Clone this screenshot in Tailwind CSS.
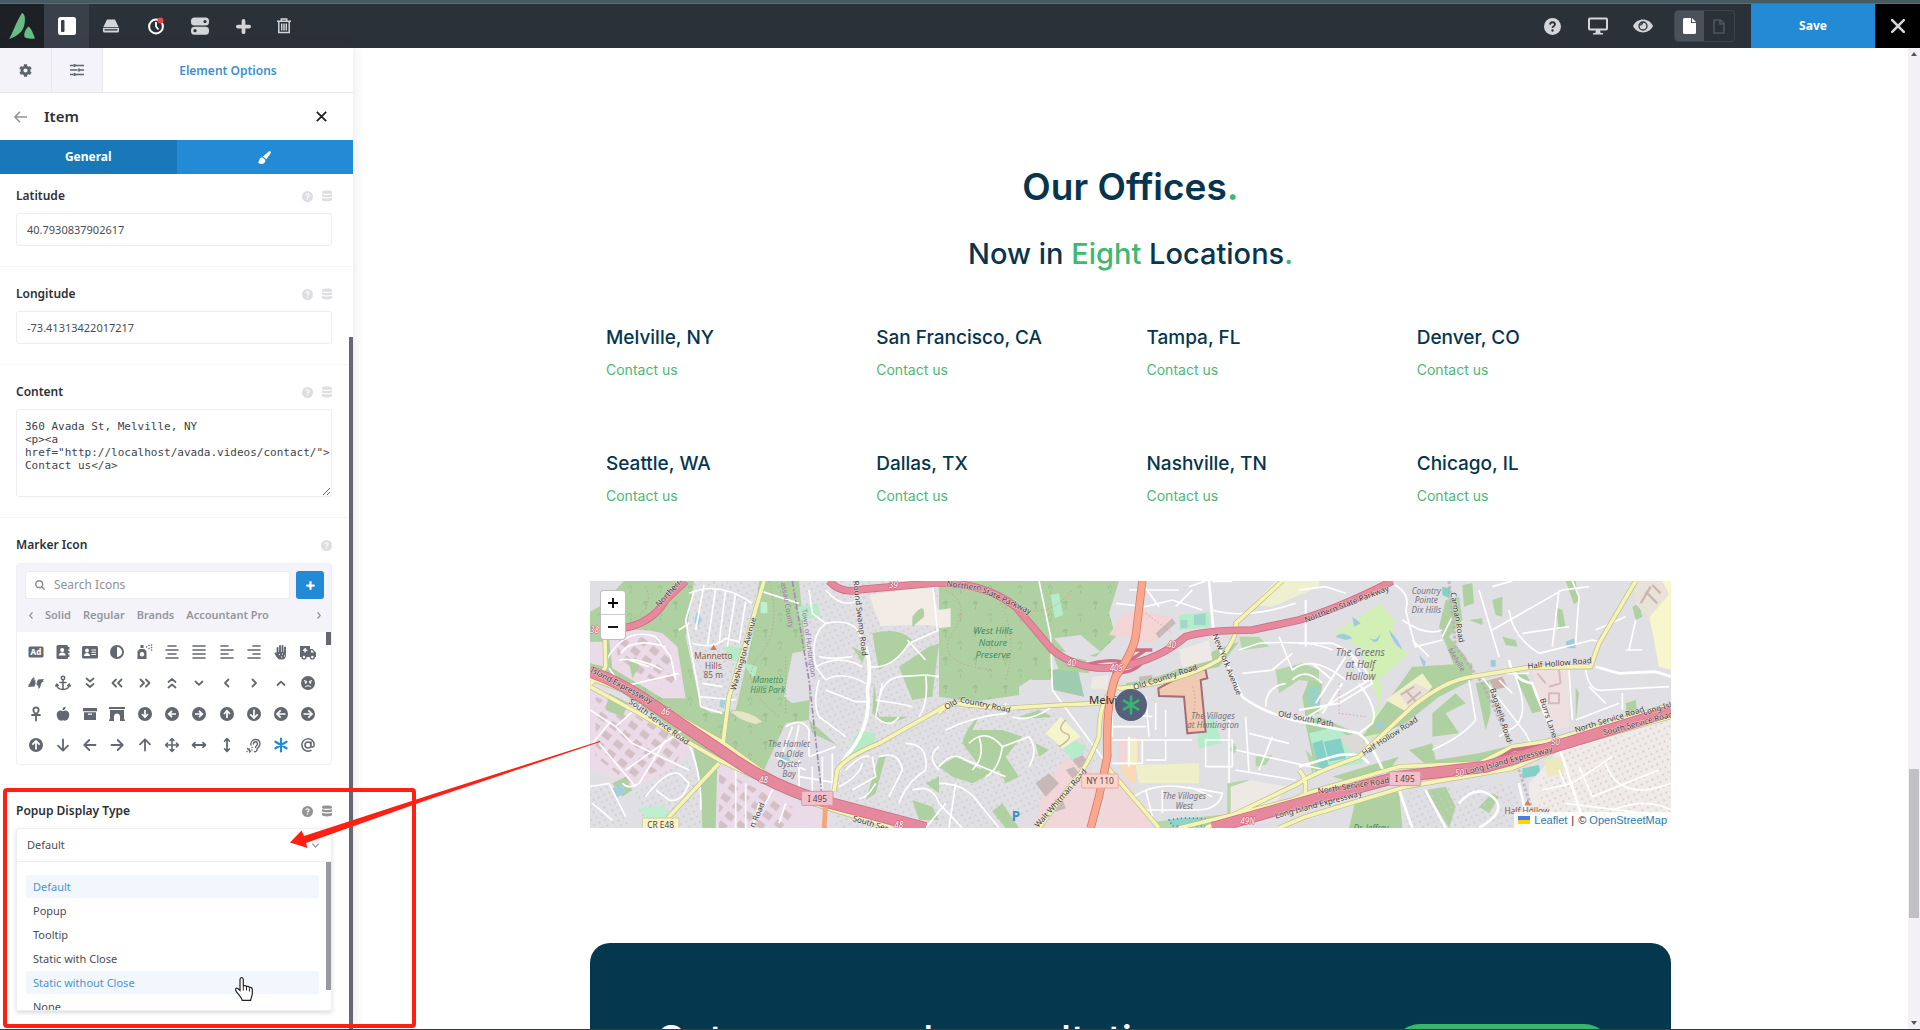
<!DOCTYPE html>
<html lang="en">
  <head>
    <meta charset="UTF-8" />
    <meta name="viewport" content="width=device-width, initial-scale=1.0" />
    <title>Avada Live Builder</title>
    <script src="https://cdn.jsdelivr.net/npm/@tailwindcss/browser@4"></script>
  </head>
  <body class="h-screen flex flex-col overflow-hidden bg-white font-['Noto_Sans',sans-serif] text-[#2c3138]">
    <!-- shared icons -->
    <svg class="hidden">
      <symbol id="help" viewBox="0 0 16 16">
        <circle cx="8" cy="8" r="8" fill="currentColor" />
        <path d="M5.7 6.2C5.8 4.7 6.8 4 8 4s2.3.8 2.3 2C10.300 7.700 8 7.600 8 9.400" fill="none" stroke="var(--mark)" stroke-width="1.7" />
        <circle cx="8" cy="11.800" r="1.100" fill="var(--mark)" />
      </symbol>
      <symbol id="database" viewBox="0 0 16 18">
        <path d="M0 2.500C0 -.6 16 -.6 16 2.500V4c0 2-16 2-16 0zM0 6.200c3 1.500 13 1.500 16 0V9.500c0 2-16 2-16 0zM0 11.700c3 1.500 13 1.500 16 0V15.500c0 3-16 3-16 0z" fill="currentColor" />
      </symbol>
      <symbol id="plus" viewBox="0 0 16 16">
        <path d="M8 2v12M2 8h12" stroke="currentColor" stroke-width="4" stroke-linecap="round" />
      </symbol>
    </svg>

    <div class="h-1 shrink-0 bg-[#465a61] border-b border-[#5c6e75]"></div>
    <header class="h-11 shrink-0 flex items-stretch bg-[#2b3138] text-[#d3d5d8]">
      <a href="#" aria-label="Avada" class="w-11 bg-[#1d2125] flex items-center justify-center">
        <svg class="w-[26px] h-[26px]" viewBox="0 0 26 26" fill="#67bd84">
          <path d="M13 0C16 1 16.500 6 15.500 11 14.300 18 10 22.500 0 26 4 20 5 13 13 0z" />
          <path d="M19.500 13.500C22 15 24 20 26 25.500 21 26 17 25.500 15.500 24 14.500 20 17 15.500 19.500 13.500z" />
        </svg>
      </a>
      <button aria-label="Toggle sidebar" class="w-[45px] bg-[#3a4049] flex items-center justify-center">
        <svg class="w-[18px] h-[18px]" viewBox="0 0 18 18"><rect width="18" height="18" rx="2.500" fill="#fff" /><rect x="3" y="3" width="3.500" height="12" rx="1" fill="#3a4049" /></svg>
      </button>
      <button aria-label="Library" class="w-11 flex items-center justify-center">
        <svg class="w-4 h-[14px]" viewBox="0 0 16 14" fill="currentColor"><path d="M4 .5h8L15.600 8H.4z" /><path fill-rule="evenodd" d="M0 8.800h16V12a1.500 1.500 0 0 1-1.500 1.500h-13A1.500 1.500 0 0 1 0 12zM1.500 10.200v1.300h13v-1.300z" /></svg>
      </button>
      <button aria-label="History" class="w-[45px] flex items-center justify-center">
        <svg class="w-[18px] h-[18px]" viewBox="0 0 18 18" fill="none"><circle cx="9" cy="9.500" r="6.900" stroke="#fff" stroke-width="2" /><path d="M9 5v4.500l2.500 3" stroke="#fff" stroke-width="1.800" /><circle cx="13.500" cy="3.500" r="3" fill="#e5484d" /></svg>
      </button>
      <button aria-label="Preferences" class="w-11 flex items-center justify-center">
        <svg class="w-[18px] h-[18px]" viewBox="0 0 18 18" fill="currentColor"><rect y=".5" width="18" height="8" rx="3.500" /><rect y="9.700" width="18" height="8" rx="3.500" /><circle cx="14" cy="4.500" r="1.600" fill="#2b3138" /><circle cx="4" cy="13.700" r="1.600" fill="#2b3138" /></svg>
      </button>
      <button aria-label="Add" class="w-[42px] flex items-center justify-center">
        <svg class="w-[15px] h-[15px]"><use href="#plus" /></svg>
      </button>
      <button aria-label="Delete" class="w-10 flex items-center justify-center">
        <svg class="w-[14px] h-4" viewBox="0 0 14 16" fill="none" stroke="currentColor" stroke-width="1.500"><path d="M0 3.200h14M4.300 3V1h5.400v2M1.800 3.500v11h10.400v-11M4.700 5.500v7M7 5.500v7M9.300 5.500v7" /></svg>
      </button>

      <div class="ml-auto flex items-stretch">
        <button aria-label="Help" class="w-[45px] flex items-center justify-center [--mark:#2b3138]">
          <svg class="w-[17px] h-[17px]"><use href="#help" /></svg>
        </button>
        <button aria-label="Responsive view" class="w-[45px] flex items-center justify-center">
          <svg class="w-5 h-[18px]" viewBox="0 0 20 18"><rect x="1" y="1.500" width="18" height="11" rx="1" fill="none" stroke="currentColor" stroke-width="2" /><path d="M8 13h4l.7 3H15v1.500H5V16h2.300z" fill="currentColor" /></svg>
        </button>
        <button aria-label="Preview" class="w-[46px] flex items-center justify-center">
          <svg class="w-5 h-[14px]" viewBox="0 0 20 14"><path d="M0 7C4-1.600 16-1.600 20 7 16 15.600 4 15.600 0 7z" fill="currentColor" /><circle cx="10" cy="7" r="4" fill="none" stroke="#2b3138" stroke-width="1.300" /><path d="M7.500 6.500A2.500 2.500 0 0 1 10 4.500" fill="none" stroke="#2b3138" stroke-width="1.500" /></svg>
        </button>
        <div class="my-[6px] ml-2 mr-4 flex rounded border border-[#3d444d] overflow-hidden">
          <button aria-label="Published" class="w-[29px] bg-[#4a515b] flex items-center justify-center">
            <svg class="w-[13px] h-4" viewBox="0 0 13 16" fill="#fff"><path d="M1.500 0H8v5h5v9.500a1.500 1.500 0 0 1-1.500 1.500h-10A1.500 1.500 0 0 1 0 14.500v-13A1.500 1.500 0 0 1 1.500 0z" /><path d="M9 0l4 4H9z" /></svg>
          </button>
          <button aria-label="Draft" class="w-[30px] flex items-center justify-center">
            <svg class="w-3 h-[15px]" viewBox="0 0 12 15" fill="none" stroke="#4d545d" stroke-width="1.700"><path d="M1 1h6.500L11 4.500V14H1zM7 1v4h4" /></svg>
          </button>
        </div>
        <button class="w-[124px] bg-[#238bd6] text-white text-xs font-bold">Save</button>
        <button aria-label="Close" class="w-[45px] bg-black flex items-center justify-center">
          <svg class="w-[14px] h-[14px]" viewBox="0 0 14 14"><path d="M1.200 1.200l11.600 11.600M12.800 1.200L1.200 12.800" stroke="#d3d5d8" stroke-width="2.600" stroke-linecap="round" /></svg>
        </button>
      </div>
    </header>

    <div class="flex-1 min-h-0 flex relative">
      <!-- element options panel -->
      <aside class="w-[353px] shrink-0 relative flex flex-col bg-white shadow-[0_0_12px_rgba(60,50,90,0.14)] z-10">
        <nav class="h-[45px] shrink-0 flex border-b border-[#e8e8ec]">
          <button aria-label="Settings" class="w-[51px] bg-[#f3f3f9] flex items-center justify-center">
            <svg class="w-[13px] h-[13px]" viewBox="0 0 512 512" fill="#5f636b"><path d="M487.400 315.700l-42.600-24.600c4.300-23.200 4.300-47 0-70.200l42.600-24.600c4.900-2.800 7.100-8.600 5.500-14-11.100-35.600-30-67.800-54.700-94.600-3.800-4.100-10-5.100-14.800-2.300L380.800 110c-17.900-15.400-38.500-27.300-60.800-35.100V25.800c0-5.600-3.900-10.500-9.400-11.700-36.700-8.200-74.300-7.800-109.200 0-5.500 1.200-9.400 6.100-9.400 11.700V75c-22.200 7.900-42.800 19.800-60.800 35.100L88.700 85.500c-4.900-2.800-11-1.900-14.800 2.300-24.700 26.700-43.600 58.900-54.700 94.600-1.700 5.400.6 11.200 5.500 14L67.300 221c-4.300 23.200-4.300 47 0 70.200l-42.600 24.600c-4.900 2.800-7.100 8.600-5.500 14 11.100 35.600 30 67.800 54.700 94.600 3.800 4.100 10 5.100 14.800 2.300l42.600-24.600c17.900 15.400 38.500 27.300 60.800 35.100v49.200c0 5.600 3.900 10.500 9.400 11.700 36.700 8.200 74.300 7.800 109.200 0 5.500-1.200 9.400-6.100 9.400-11.700v-49.200c22.200-7.900 42.800-19.800 60.800-35.100l42.600 24.600c4.900 2.800 11 1.900 14.800-2.300 24.700-26.700 43.600-58.900 54.700-94.600 1.500-5.500-.7-11.300-5.600-14.100zM256 336c-44.100 0-80-35.900-80-80s35.900-80 80-80 80 35.900 80 80-35.900 80-80 80z" /></svg>
          </button>
          <button aria-label="Page options" class="w-[52px] bg-[#f3f3f9] border-x border-[#e8e8ee] flex items-center justify-center">
            <svg class="w-[14px] h-3" viewBox="0 0 14 12" stroke="#5f636b" stroke-width="1.500"><path d="M0 1.500h3.500M5 1.500h9M0 6h7.500M10 6h4M0 10.500h3.500M5 10.500h9" /><path d="M4.500 0v3M9 4.500v3M4.500 9v3" stroke-width="1.800" /></svg>
          </button>
          <button class="flex-1 pt-[2px] text-xs font-semibold text-[#3d8fd1]">Element Options</button>
        </nav>
        <div class="h-[47px] shrink-0 flex items-center pl-[14px] pr-[26px]">
          <button aria-label="Back"><svg class="w-[13px] h-3" viewBox="0 0 13 12" fill="none" stroke="#8f9298" stroke-width="1.500"><path d="M13 6H1M6 .8L.9 6 6 11.200" /></svg></button>
          <h2 class="ml-[17px] text-[15px] font-semibold">Item</h2>
          <button aria-label="Close item" class="ml-auto"><svg class="w-[11px] h-[11px]" viewBox="0 0 11 11" stroke="#1f2328" stroke-width="1.800"><path d="M.8.8l9.400 9.400M10.200.8L.8 10.200" /></svg></button>
        </div>
        <div class="h-[34px] shrink-0 flex text-white">
          <button class="flex-1 bg-[#1878ba] text-xs font-bold">General</button>
          <button aria-label="Design" class="flex-1 bg-[#238bd6] flex items-center justify-center">
            <svg class="w-[13px] h-[13px]" viewBox="0 0 13 13" fill="#fff"><path d="M12.500.4c.6.500.6 1.200.2 1.800L8.300 8.300 5 5.500 10.800.500c.5-.4 1.200-.5 1.700-.1zM4.300 6.300l3 2.700C7.500 11.500 6 13 3.500 13 1.500 13 .3 12.300 0 11c1.800-.3.8-4.500 4.300-4.700z" /></svg>
          </button>
        </div>

        <div class="flex-1 min-h-0 overflow-hidden text-[11px] [--mark:#fff]">
          <section class="pt-3 pb-5 pl-4 pr-[21px] border-b border-[#f6f6f8]">
            <div class="h-5 flex items-center gap-[9px] text-[#dedde1]">
              <label for="latitude" class="mr-auto text-xs font-semibold text-[#2c3138]">Latitude</label>
              <svg class="w-[11px] h-[11px]"><use href="#help" /></svg>
              <svg class="w-[10px] h-3"><use href="#database" /></svg>
            </div>
            <input id="latitude" type="text" value="40.7930837902617" class="mt-[7px] block w-full h-[33px] px-[10px] border border-[#eeeef1] rounded-[3px] text-[#4a4e57]" />
          </section>
          <section class="pt-[17px] pb-5 pl-4 pr-[21px] border-b border-[#f6f6f8]">
            <div class="h-5 flex items-center gap-[9px] text-[#dedde1]">
              <label for="longitude" class="mr-auto text-xs font-semibold text-[#2c3138]">Longitude</label>
              <svg class="w-[11px] h-[11px]"><use href="#help" /></svg>
              <svg class="w-[10px] h-3"><use href="#database" /></svg>
            </div>
            <input id="longitude" type="text" value="-73.41313422017217" class="mt-[7px] block w-full h-[33px] px-[10px] border border-[#eeeef1] rounded-[3px] text-[#4a4e57]" />
          </section>
          <section class="pt-[17px] pb-5 pl-4 pr-[21px] border-b border-[#f6f6f8]">
            <div class="h-5 flex items-center gap-[9px] text-[#dedde1]">
              <label for="content" class="mr-auto text-xs font-semibold text-[#2c3138]">Content</label>
              <svg class="w-[11px] h-[11px]"><use href="#help" /></svg>
              <svg class="w-[10px] h-3"><use href="#database" /></svg>
            </div>
            <textarea id="content" class="mt-[7px] block w-full h-[88px] pt-[10px] pl-2 pr-0 border border-[#eeeef1] rounded-[3px] font-['DejaVu_Sans_Mono',monospace] text-[11px] leading-[13px] text-[#3f434b] resize-y overflow-hidden">360 Avada St, Melville, NY
&lt;p&gt;&lt;a
href="http://localhost/avada.videos/contact/"&gt;
Contact us&lt;/a&gt;</textarea>
          </section>
          <section class="pt-[17px] pb-[19px] pl-4 pr-[21px] border-b border-[#f6f6f8]">
            <div class="h-5 flex items-center text-[#dedde1]">
              <label for="search" class="mr-auto text-xs font-semibold text-[#2c3138]">Marker Icon</label>
              <svg class="w-[11px] h-[11px]"><use href="#help" /></svg>
            </div>
            <div class="mt-2 relative border border-[#f0f0f4] rounded-[3px]">
              <div class="h-[68px] bg-[#f3f3f9] pt-[7px] pl-2 pr-[7px]">
                <div class="flex gap-[6px]">
                  <div class="flex-1 h-7 flex items-center gap-[9px] pl-[9px] bg-white border border-[#ececf0] rounded-[3px]">
                    <svg class="w-[10px] h-[10px] shrink-0" viewBox="0 0 10 10" fill="none" stroke="#8a8d94" stroke-width="1.500"><circle cx="4.200" cy="4.200" r="3.400" /><path d="M6.700 6.700l3 3" /></svg>
                    <input id="search" type="text" placeholder="Search Icons" class="w-full text-xs placeholder:text-[#8f9196]" />
                  </div>
                  <button aria-label="Add icon set" class="w-7 h-7 flex items-center justify-center rounded-[3px] bg-[#238bd6] text-white">
                    <svg class="w-[9px] h-[9px]"><use href="#plus" /></svg>
                  </button>
                </div>
                <div class="mt-[6px] h-5 flex items-center gap-3 pl-1 pr-[3px] font-semibold text-[#94969c]">
                  <button aria-label="Previous sets"><svg class="w-1 h-[7px]" viewBox="0 0 4 7" fill="none" stroke="#8a8d94" stroke-width="1.200"><path d="M3.500.4L.7 3.500l2.800 3.100" /></svg></button>
                  <button>Solid</button>
                  <button>Regular</button>
                  <button>Brands</button>
                  <button>Accountant Pro</button>
                  <button aria-label="Next sets" class="ml-auto"><svg class="w-1 h-[7px]" viewBox="0 0 4 7" fill="none" stroke="#8a8d94" stroke-width="1.200"><path d="M.5.4l2.800 3.100L.5 6.600" /></svg></button>
                </div>
              </div>
              <div id="icons" class="grid grid-cols-11 pt-1 pb-1 pl-[5px] pr-[9px] text-[#636770]"></div>
              <div class="absolute right-0 top-[68px] w-[5px] h-[13px] bg-[#666870]"></div>
            </div>
          </section>
          <section class="pt-4 pl-4 pr-[21px]">
            <div class="h-5 flex items-center gap-[9px] text-[#929297]">
              <label for="popup" class="mr-auto text-xs font-semibold text-[#2c3138]">Popup Display Type</label>
              <svg class="w-[11px] h-[11px]"><use href="#help" /></svg>
              <svg class="w-[10px] h-3"><use href="#database" /></svg>
            </div>
            <div class="mt-[7px] relative h-[183px] overflow-hidden rounded-[3px] border border-[#eeeef1] shadow-[0_2px_4px_rgba(0,0,0,0.14)]">
              <select id="popup" class="block w-full h-[33px] pl-[10px] appearance-none border-b border-[#eeeef1] text-[#4a4e57]">
                <option>Default</option>
                <option>Popup</option>
                <option>Tooltip</option>
                <option>Static with Close</option>
                <option>Static without Close</option>
                <option>None</option>
              </select>
              <svg class="absolute right-3 top-[14px] w-[7px] h-[5px]" viewBox="0 0 7 5" fill="none" stroke="#9a9ca2" stroke-width="1.200"><path d="M.4.7l3.100 3.300L6.600.7" /></svg>
              <ul class="pt-[13px] pl-[9px] pr-3 leading-[23px] text-[#4a4e57]">
                <li class="mb-px pl-[7px] rounded-[2px] bg-[#f1f7fd] text-[#4d93cf]">Default</li>
                <li class="mb-px pl-[7px]">Popup</li>
                <li class="mb-px pl-[7px]">Tooltip</li>
                <li class="mb-px pl-[7px]">Static with Close</li>
                <li class="mb-px pl-[7px] rounded-[2px] bg-[#f1f7fd] text-[#4d93cf]">Static without Close</li>
                <li class="mb-px pl-[7px]">None</li>
              </ul>
              <div class="absolute right-0 top-[33px] w-[5px] h-32 bg-[#98999e]"></div>
            </div>
          </section>
        </div>
        <div class="absolute right-0 top-[289px] bottom-0 w-1 bg-[#666870]"></div>
      </aside>

      <!-- page preview -->
      <main class="flex-1 min-w-0 overflow-hidden font-[Inter,sans-serif] text-[#07354d]">
        <div class="w-full max-w-[1081px] mx-auto">
          <h1 class="pt-[113px] text-center text-[37px] leading-[52px] font-semibold">Our Offices<span class="text-[#40b871]">.</span></h1>
          <h2 class="mt-[22px] text-center text-[29px] leading-[38px] font-medium">Now in <span class="text-[#40b871]">Eight</span> Locations<span class="text-[#40b871]">.</span></h2>

          <div class="mt-[51px] grid grid-cols-4 gap-y-[70px]">
            <div class="pl-4">
              <h3 class="text-[19px] leading-7 font-medium">Melville, NY</h3>
              <a href="#" class="mt-2 block text-sm leading-5 text-[#4cb877]">Contact us</a>
            </div>
            <div class="pl-4">
              <h3 class="text-[19px] leading-7 font-medium">San Francisco, CA</h3>
              <a href="#" class="mt-2 block text-sm leading-5 text-[#4cb877]">Contact us</a>
            </div>
            <div class="pl-4">
              <h3 class="text-[19px] leading-7 font-medium">Tampa, FL</h3>
              <a href="#" class="mt-2 block text-sm leading-5 text-[#4cb877]">Contact us</a>
            </div>
            <div class="pl-4">
              <h3 class="text-[19px] leading-7 font-medium">Denver, CO</h3>
              <a href="#" class="mt-2 block text-sm leading-5 text-[#4cb877]">Contact us</a>
            </div>
            <div class="pl-4">
              <h3 class="text-[19px] leading-7 font-medium">Seattle, WA</h3>
              <a href="#" class="mt-2 block text-sm leading-5 text-[#4cb877]">Contact us</a>
            </div>
            <div class="pl-4">
              <h3 class="text-[19px] leading-7 font-medium">Dallas, TX</h3>
              <a href="#" class="mt-2 block text-sm leading-5 text-[#4cb877]">Contact us</a>
            </div>
            <div class="pl-4">
              <h3 class="text-[19px] leading-7 font-medium">Nashville, TN</h3>
              <a href="#" class="mt-2 block text-sm leading-5 text-[#4cb877]">Contact us</a>
            </div>
            <div class="pl-4">
              <h3 class="text-[19px] leading-7 font-medium">Chicago, IL</h3>
              <a href="#" class="mt-2 block text-sm leading-5 text-[#4cb877]">Contact us</a>
            </div>
          </div>

          <div class="mt-[75px] relative">
            <svg class="block w-full h-[247px] font-['Noto_Sans',sans-serif]" viewBox="33 33 3243 741" preserveAspectRatio="xMidYMid slice">
              <defs>
                <pattern id="houses" width="26" height="24" patternUnits="userSpaceOnUse" patternTransform="rotate(18)"><rect x="4" y="4" width="5" height="5" fill="#c9c6c9" /><rect x="17" y="15" width="5" height="5" fill="#cfccce" /></pattern>
                <pattern id="factories" width="44" height="36" patternUnits="userSpaceOnUse" patternTransform="rotate(38)"><rect x="6" y="6" width="26" height="20" fill="#d3c0c5" /></pattern>
                <pattern id="trees" width="90" height="84" patternUnits="userSpaceOnUse"><path d="M20 34v-9m-6-6a5 5 0 1 1 8 0m2 2a5 5 0 1 1 2-8M65 70v-9m-6-6a5 5 0 1 1 8 0" fill="none" stroke="#93bb84" stroke-width="2.500" /></pattern>
              </defs>
              <rect x="33" y="33" width="3243" height="741" fill="#e0dfe3" />

              <!-- west: land -->
              <path d="M33 33H740L800 110 830 250 700 200 690 450 780 530 700 690 400 560 33 300z" fill="#afd1a2" />
              <path d="M33 33H740L800 110 830 250 700 200 690 450 780 530 700 690 400 560 33 300z" fill="url(#trees)" />
              <path d="M33 33H135L60 110 33 125zM345 33H540L520 200 470 420 400 430 365 410 320 200zM640 250l50-10v150l-50 10-25-20z" fill="#e0dfe3" />
              <path d="M660 33H1010L880 80V430L960 480 1080 430V774H770L780 520 700 430z" fill="#e0dfe3" />
              <path d="M345 33H540L520 200 470 420 400 430 365 410 320 200zM670 33H1080V774H770L780 520 700 430z" fill="url(#houses)" />
              <path d="M33 215L75 215 80 290 33 280zM90 200Q160 165 250 190L295 230 320 385 250 385 100 295z" fill="#ebdbe8" />
              <path d="M110 215Q160 190 240 210L270 240 290 340 240 340 120 280z" fill="url(#factories)" />
              <path d="M33 335L160 400 340 520 300 590 170 650 33 600zM410 575L640 690 750 720V774H410z" fill="#ebdbe8" />
              <path d="M50 380L160 430 320 520 290 580 150 640 50 560zM420 600L640 710V774H420z" fill="url(#factories)" />
              <path d="M33 640L90 640 150 774H33zM170 660L330 560 370 640 365 774H190z" fill="url(#houses)" />
              <path d="M340 520L415 575 410 774H370L365 640zM90 370l60 30-20 40-50-20zM150 280l20-20 10 30-20 35zM100 640l40-20 20 40-30 20z" fill="#afd1a2" />
              <path d="M440 225l50 10-5 40-40-5zM490 275l45 15-10 40zM655 110l60-10 10 40-60 10zM840 480l50 10-5 40-95 45z" fill="#b7ebc8" />
              <path d="M180 715l70-10 30 40-50 29zM545 95h20v35h-20z" fill="#bdf0d0" />
              <path d="M620 460L690 450 700 490 785 530 770 660 700 680 555 600z" fill="#dfdce3" />
              <path d="M455 425Q500 415 550 455L530 462Q480 450 455 425z" fill="#e8e5c6" />
              <path d="M870 75L1060 48 1075 115 1115 120 1110 172 1040 165 905 168z" fill="#f2ebe6" />
              <path d="M1000 140Q1040 90 1035 140L1000 170zM880 190Q960 170 1000 210L960 260 900 300 890 250zM885 340L900 440 990 440 920 465 880 430zM820 230L860 250 850 280zM960 290L1050 230 1080 220 1060 380 1000 390z" fill="#afd1a2" />
              <path d="M900 560l20 0-30 110-30 20zM1000 690l60 20 20 40-60 0zM1040 640l40-20v50z" fill="#afd1a2" />
              <path d="M353 125l15 20-10 25-12-15zM425 385l15 5-5 25-14-5zM100 655l30-12 10 20-25 20zM598 560l30-10 5 25-28 5z" fill="#a6cfdc" />

              <!-- middle: land -->
              <g transform="translate(1080 0)">
                <path d="M0 33H540L510 130 530 200 470 260 340 240 335 330 270 330 240 375 100 395 0 380z" fill="#afd1a2" />
                <path d="M0 33H540L510 130 530 200 470 260 340 240 335 330 270 330 240 375 100 395 0 380z" fill="url(#trees)" />
                <path d="M345 205l80-10 60 50-80 30zM240 350l35-22 45 20v60h-80z" fill="#e0dfe3" />
                <path d="M0 405H240L340 420 480 560 420 650 200 774H0z" fill="url(#houses)" />
                <path d="M335 300l80-10 20 90-90-20z" fill="#9fcbb0" />
                <path d="M0 120l35-5 0 55-35 5z" fill="#f2ebe6" />
                <path d="M335 75l25-5 12 65-25 10zM720 135l90-10 5 45-95 10zM370 540l40-30 35 25-40 35zM1100 470l40-10v80z" fill="#b5ecca" />
                <path d="M725 150h20v25h-20zM765 135l35-5v35h-35z" fill="#9ed6c9" />
                <path d="M550 135L590 120 640 130 700 140 680 180 640 220 560 200 510 195zM540 510l60-10v80h-60z" fill="#f4d5d6" />
                <path d="M380 560L450 600 500 640 470 774H290L310 660zM510 600L570 640 640 774H480z" fill="#f1d6da" />
                <path d="M290 640l40-30 30 30-40 40zM400 570l30-15 20 25-30 15zM380 600l25-10 15 20-20 15zM650 190l50-45 10 15-50 45zM340 700l30-15 10 30-30 10zM600 320l40-5v20h-40z" fill="#c9b8b8" />
                <path d="M320 490l45-50 60 60-55 35z" fill="#f4f5c8" />
                <path d="M380 450q-30 30 0 40t-20 40" fill="none" stroke="#c8b2a0" stroke-width="4" />
                <path d="M590 585L780 580V640H600zM565 505l30 0v80h-30z" fill="#edf0c8" />
                <path d="M540 585h50v58l-30-20z" fill="#fbd9b4" />
                <path d="M560 340Q700 320 830 240L900 215 840 290 700 320 560 360zM440 270Q380 260 340 250L360 300 450 310zM120 440Q80 470 70 520L130 600 50 560 0 590 40 620 100 640 180 600 200 640 240 620 200 560 250 500 190 480 100 480zM240 440l60-20 40 20-50 5zM290 520l40 20-30 20zM190 700l50 74H200l-40-50z" fill="#afd1a2" />
                <path d="M865 640l60-10 20 15-20 60-20 60h-40zM950 560l50-5-20 30-30 5zM1010 300l80-20 50 20v40l-60-10-60 40zM900 200l60 0 30 30-80 10zM1100 540l40 40-20 30zM870 540l15-20 10 20-10 10zM650 755l190-20 20 39H650z" fill="#b5d6a8" />
                <path d="M820 430l30 90-70 15-5-40z" fill="#b5ecca" />
                <path d="M875 650l60-20 110 20-60 80-110 30zM460 320l50-5-5 45-50-5zM720 240l90-30 10 60-90 25z" fill="#efe9e6" />
                <path d="M940 105L1010 33H1140V50L1000 110z" fill="#eff0cf" />
                <path d="M658 355L770 295 800 300 805 325 785 330 800 485 745 490 735 380 660 378z" fill="#efcbb4" stroke="#a76c77" stroke-width="6" />
                <path d="M1105 340h30v60h-30z" fill="#8fd3cd" />
                <path d="M690 750q60-12 130 0v18H700z" fill="#8fd3cd" stroke="#3a9bb8" stroke-dasharray="4 8" stroke-width="5" />
              </g>

              <!-- east: land -->
              <g transform="translate(2160 0)">
                <path d="M105 190L200 130 240 100 285 150 280 220 330 250 240 330 250 350 230 500 320 480 270 510 190 500 240 400 180 230z" fill="#d2f0b5" />
                <path d="M190 500L340 290 520 280 520 330 420 380 320 460 250 490zM420 170L440 90 480 80 490 150 450 200 500 260 520 310 470 300zM20 460L60 440 200 500 190 560 50 610z" fill="#afd1a2" />
                <path d="M330 540L400 520 410 570 540 550 620 530 600 580 400 600zM400 430L470 370 500 400 440 430 480 490 400 500zM530 340L570 330 575 430 560 480zM640 300L680 310 740 420 700 430zM100 620L300 560 270 600 170 640zM170 690L300 660 310 774H150zM380 660l60-10 30 60-20 64zM540 710l40-40 20 10-30 50zM490 45l30-5 5 60-30 10zM580 90l30-10 0 60-20-5zM770 110l20 10 10 50-20 10zM610 200l40 10 5 20-35-5zM510 150l40-5v20zM830 350l10 20-10 90zM980 400l30-10 5 40-30 10zM1000 110l20-10 10 40-20 10zM1020 650l30-20 30 40-50 30zM1080 460l30-10v30z" fill="#afd1a2" />
                <path d="M800 33h30l10 60-15 10z" fill="#afd1a2" />
                <path d="M30 330L70 340 60 430 20 440 10 380z" fill="#afd1a2" />
                <path d="M25 350h35v55h-35z" fill="#98d3c4" />
                <path d="M30 490l80-20 90 70-10 40-130 20z" fill="#b5ecca" />
                <path d="M40 520l30-10 20 80-30 10zM75 515l50-10 15 60-50 10zM430 50l25 5-5 30-20-10zM1060 180l20-10 10 40-25 5zM670 595l50-10 5 30-55 10z" fill="#86cfc8" />
                <path d="M110 200q20-20 50 5l-20 5zM160 140l25 20-20 10zM205 195q20 30 40-5-10 50-40 5zM270 180q30 30 40 60-30-20-40-60zM800 215l25-10 5 30h-25zM575 270l15 0v20h-15zM360 255l20 20-5 20zM225 465l30-10 0 15-20 5z" fill="#9fcbe0" />
                <path d="M260 390L370 310 400 350 330 430z" fill="#f2f0ca" />
                <path d="M300 370l50-30 40 20-60 55z" fill="#eadfd8" />
                <path d="M305 375l40-25M325 400l40-35M320 360l35 40" stroke="#cdb6ae" stroke-width="6" />
                <path d="M700 300L810 280V470L770 480 720 400z" fill="#efe0e0" />
                <path d="M715 310l25 30M750 350l35-10M780 300l5 40M750 370h30v30h-30z" stroke="#d9b9b9" stroke-width="6" fill="none" />
                <path d="M570 330l40-10 15 30-40 10z" fill="#c9b2ac" />
                <path d="M1030 33H1116V300L1080 290z" fill="#f7f6cc" />
                <path d="M1000 33h90l20 40-60 70-40-40z" fill="#e9e2d8" />
                <path d="M1025 100l30-50M1040 65l35 35M1060 45l25 25" stroke="#cdb6ae" stroke-width="7" />
                <path d="M690 640L780 540 1116 440V774H690z" fill="#f0ebe8" />
                <path d="M720 640L790 550 1116 450V774H720zM320 660L640 640 690 774H320z" fill="url(#houses)" />
                <path d="M735 570l50-10 10 50-50 10z" fill="#eee8bd" />
                <path d="M120 500l60-10 30 50-50 10z" fill="#ddd9d6" />
              </g>

              <!-- local streets -->
              <g fill="none" stroke="#fff" stroke-width="5">
                <path d="M345 65L320 150 360 370 365 410M375 45L350 180M410 55L385 230M440 60L420 220M470 70L445 230M500 95L480 220M330 70Q420 30 520 100M340 220Q400 240 440 205L480 215M370 340L430 350M360 380L470 390M365 410L430 430M550 65L660 100" />
                <path d="M85 265Q140 170 230 200L275 260 290 330M125 250Q160 200 260 230M120 270Q180 260 250 300M150 270l60 20M90 295L130 350 300 310M300 180L330 160" />
                <path d="M33 420L110 470 160 520 330 600M90 460L33 530M110 470L200 390M140 600L310 480M60 520L170 650M130 640Q150 660 180 640L260 510M33 650L90 640 140 740M40 700l60 50M200 680Q260 600 300 610L330 640Q310 700 270 690L230 660M330 520Q370 620 365 720M470 600V774M500 640V774M540 700l-20 74M580 660L540 740M620 700l-20 60" />
                <path d="M620 470Q670 440 690 480L690 560M640 470L610 550M660 465L640 560M590 560L680 600M660 570V660M690 560L770 530M700 590V670M730 560V680M760 550V660M660 620L780 640" />
                <path d="M690 60L700 130 740 160Q690 200 710 290L740 330M740 60Q790 120 840 90M740 160Q840 140 850 220M720 260Q760 270 820 260M710 290Q780 250 850 290M740 330Q790 300 860 340M720 330Q700 400 720 440L800 500M740 360L830 395 870 395M870 290Q940 300 990 220L1080 180M985 210L1040 270M890 390Q960 400 1000 410M900 390Q910 330 960 320L1040 315 1080 320M1040 315Q1050 400 1020 440M910 340L890 440Q930 480 960 440M1075 180L1060 33" />
                <path d="M800 600Q850 550 870 560M780 650Q840 620 850 580M880 560L890 620 820 660M890 640Q860 690 840 685M900 560Q960 540 970 600L930 680M980 520Q1050 520 1040 600 980 640 960 700M1080 530Q1040 560 1080 600M1000 660Q1060 640 1080 700M1100 700L1040 774" />
                <path d="M1380 33L1415 200 1420 360 1575 570M1080 590Q1120 540 1160 570L1280 620M1100 480Q1180 440 1280 430V400M1170 520Q1220 470 1270 530L1350 500Q1380 540 1350 590M1270 530Q1260 600 1220 620M1200 500Q1220 560 1180 600M1080 640Q1160 640 1200 700L1260 774M1080 700L1150 774M1130 640L1110 774M1300 440Q1350 460 1420 410" />
                <path d="M1610 100L1700 110 1780 90 1870 120M1690 40L1740 110M1650 60L1800 60M1790 110L1840 60M1830 50L1880 33M1900 120Q2000 150 2150 100M1600 410V500M1580 470H1700M1620 430L1720 440M1600 510H1690V580H1600M1650 500V590M1690 510H1760V570H1700M1760 510H1840M1880 510V590H1960V510zM1730 400V480M1760 420V500M1700 380L1710 500" />
                <path d="M1665 680Q1720 640 1800 650T1930 670Q1920 720 1850 720H1700zM1700 660L1720 740M1750 660V730M1830 650L1900 680" />
                <path d="M1960 33L1900 33M1890 33L1905 200 1990 380Q2040 420 2140 450L2340 490Q2380 520 2420 620" stroke-width="8" />
                <path d="M1980 240L2040 220Q2200 210 2260 240M1990 310L2080 300 2140 250M2010 490L2130 520M1970 540L2240 600M1970 600L2150 630M1950 450V640M2000 440L2010 610M2080 500L2040 600M2100 200L2140 300Q2200 250 2300 330M2120 340Q2060 350 2060 410M2140 330Q2180 290 2230 340" />
                <path d="M2160 420L2280 400 2380 340Q2340 250 2260 220H2160M2180 90V230M2210 400L2300 260M2230 430L2290 340M2340 340Q2400 420 2380 460L2340 490M2170 450L2370 330M2360 340L2310 240M2200 280L2260 330" stroke-width="6" />
                <path d="M2160 60L2240 50 2300 70M2420 33Q2500 60 2480 120 2500 200 2510 230L2590 210M2470 150Q2540 200 2590 180M2500 210L2550 260M2590 200Q2610 160 2620 140M2700 60L2760 260M2740 50L2800 33M2740 180L2950 60 3030 50M2790 120Q2800 200 2880 250M2830 190L2970 170M2880 250L3040 210L3060 215M2920 230L2940 60M2990 220L3000 80 2980 33M3050 180L3140 140M3150 240L3170 150M3140 240H3190" />
                <path d="M2670 330L2690 450Q2650 500 2560 540M2700 310L2840 490 2860 530M2760 330L2800 370M2810 320Q2860 450 2790 480L2760 500M2780 310L2850 310M2970 300L2980 450M3020 300Q3030 370 3080 360L3270 350M3030 350L3080 400M3130 370V420M2990 450L3120 400" />
                <path d="M3050 290L3120 310 3230 305 3276 320M2790 270Q2800 330 2860 340 2880 400 2930 500L3020 774M2160 590L2260 560Q2340 540 2370 580M2460 660L2500 774M2540 660Q2560 700 2600 774M2640 700Q2690 640 2740 680T2700 774M2820 640L2850 774" stroke-width="8" />
                <path d="M2890 660L2980 640 3100 560M3000 590L3040 680 3240 600M3080 580Q3120 700 3276 640M3100 720Q3200 680 3276 720M2960 700L3276 740M2940 600L2960 650" />
                <path d="M860 230Q880 300 865 360 880 470 800 560L775 610" stroke-width="11" />
              </g>
              <g fill="none" stroke="#d98a8a" stroke-width="2" stroke-dasharray="5 6">
                <path d="M570 33Q610 180 540 260T600 440M620 260V430M1100 60Q1180 100 1120 190T1240 300M1300 100Q1400 160 1480 60M1260 90Q1320 200 1280 330M200 50Q230 120 150 150M1700 130L1780 190M1840 350Q1860 400 1830 470M2280 340V430L2360 440" />
              </g>
              <path d="M640 33L690 330 740 774" fill="none" stroke="#a18bb0" stroke-width="5" stroke-dasharray="18 6 5 6" />
              <path d="M2610 33L2630 230 2710 340 2790 510 2860 720" fill="none" stroke="#b9aab8" stroke-width="9" stroke-dasharray="9 6" opacity=".7" />

              <!-- secondary roads, casing then fill -->
              <g fill="none" stroke-linejoin="round">
                <g stroke="#bcbd8c" stroke-width="15">
                  <path d="M555 33L500 220 450 380 432 520M33 342L65 315 80 290 78 210M420 580L270 740 262 774M765 664L775 600Q800 560 900 520L1060 430 1110 400M1080 430Q1110 390 1160 405L1280 415 1440 405 1560 400M1620 350Q1560 370 1560 500 1520 600 1480 640L1380 774M1575 580L1740 774M1620 355Q1800 340 1920 270 1980 200 1970 160L2110 33" />
                  <path d="M33 325L200 385 420 510 600 640 720 680 1020 774M33 350L180 430 420 570 700 700 940 774M1880 774L2160 640Q2200 610 2340 560L2500 410Q2600 330 2680 320L2850 292 3035 290 3060 220 3160 50 3170 33M1800 774L2140 690 2200 665 2460 590 2700 580 2800 530 2900 515 3276 405M2100 774L2180 740 2480 650 2800 595 2940 535 3276 440M2160 720Q2200 640 2160 600" />
                </g>
                <g stroke="#f5f4b5" stroke-width="11">
                  <path d="M555 33L500 220 450 380 432 520M33 342L65 315 80 290 78 210M420 580L270 740 262 774M765 664L775 600Q800 560 900 520L1060 430 1110 400M1080 430Q1110 390 1160 405L1280 415 1440 405 1560 400M1620 350Q1560 370 1560 500 1520 600 1480 640L1380 774M1575 580L1740 774M1620 355Q1800 340 1920 270 1980 200 1970 160L2110 33" />
                  <path d="M33 325L200 385 420 510 600 640 720 680 1020 774M33 350L180 430 420 570 700 700 940 774M1880 774L2160 640Q2200 610 2340 560L2500 410Q2600 330 2680 320L2850 292 3035 290 3060 220 3160 50 3170 33M1800 774L2140 690 2200 665 2460 590 2700 580 2800 530 2900 515 3276 405M2100 774L2180 740 2480 650 2800 595 2940 535 3276 440M2160 720Q2200 640 2160 600" />
                </g>
                <!-- motorways -->
                <g stroke="#cf6f86">
                  <path d="M33 305Q120 335 200 390L430 545Q560 640 720 690L1040 774M1900 774L2180 695 2460 620 2720 590 2960 520 3276 422" stroke-width="36" />
                  <path d="M130 175Q220 160 260 90L320 33M750 33Q790 75 850 58L1080 38Q1220 40 1310 110L1420 240Q1510 310 1620 290 1740 270 1820 200 1880 180 2020 180L2160 150Q2280 115 2440 33" stroke-width="23" />
                  <path d="M1500 290Q1600 260 1640 280L1700 240M1660 240H1720M1600 310Q1680 310 1700 260M2720 590L2800 540 2900 525" stroke-width="10" />
                </g>
                <g stroke="#e6899c">
                  <path d="M33 305Q120 335 200 390L430 545Q560 640 720 690L1040 774M1900 774L2180 695 2460 620 2720 590 2960 520 3276 422" stroke-width="31" />
                  <path d="M130 175Q220 160 260 90L320 33M750 33Q790 75 850 58L1080 38Q1220 40 1310 110L1420 240Q1510 310 1620 290 1740 270 1820 200 1880 180 2020 180L2160 150Q2280 115 2440 33" stroke-width="18" />
                </g>
                <path d="M1690 33L1670 200Q1660 250 1610 320 1580 400 1585 560L1560 680 1535 774" stroke="#dd7a66" stroke-width="25" />
                <path d="M1690 33L1670 200Q1660 250 1610 320 1580 400 1585 560L1560 680 1535 774" stroke="#faa78f" stroke-width="20" />
                <path d="M735 774L740 710" stroke="#f5a676" stroke-width="14" />
              </g>

              <!-- labels -->
              <g font-size="24" fill="#3f3a3a" stroke="#f6f4f4" stroke-opacity=".6" stroke-width="3" paint-order="stroke">
                <text transform="translate(240 112) rotate(-47)">Northern S</text>
                <text transform="translate(470 362) rotate(-74)">Washington Avenue</text>
                <text transform="translate(33 305) rotate(28)">Island Expressway</text>
                <text transform="translate(148 398) rotate(36)">South Service Road</text>
                <text transform="translate(822 33) rotate(83)">Round Swamp Road</text>
                <text transform="translate(820 752) rotate(17)">South Ser</text>
                <text transform="translate(526 774) rotate(-66)">n Road</text>
                <text transform="translate(1102 420) rotate(-30)">Old</text>
                <text transform="translate(1102 48) rotate(8)">Northern</text>
                <text transform="translate(1208 66) rotate(25)">State Parkway</text>
                <text transform="translate(1142 396) rotate(12)">Country Road</text>
                <text transform="translate(1666 360) rotate(-18)">Old Country Road</text>
                <text transform="translate(1900 195) rotate(68)">New York Avenue</text>
                <text transform="translate(2096 438) rotate(11)">Old South Path</text>
                <text transform="translate(1378 774) rotate(-49)">Walt Whitman Road</text>
                <text transform="translate(2090 746) rotate(-15)">Long Island Expressway</text>
                <text transform="translate(2180 158) rotate(-21)">Northern State Parkway</text>
                <text transform="translate(2614 68) rotate(80)">Carman Road</text>
                <text transform="translate(2732 358) rotate(72)">Bagatelle Road</text>
                <text transform="translate(2882 388) rotate(72)">Burrs Lane</text>
                <text transform="translate(2846 296) rotate(-5)">Half Hollow Road</text>
                <text transform="translate(2356 558) rotate(-33)">Half Hollow Road</text>
                <text transform="translate(2218 672) rotate(-9)">North Service Road</text>
                <text transform="translate(2662 614) rotate(-15)">Long Island Expressway</text>
                <text transform="translate(2990 488) rotate(-17)">North Service Road</text>
                <text transform="translate(3075 496) rotate(-15)">South Service Road</text>
                <text transform="translate(3194 436) rotate(-16)">Long Isla</text>
              </g>
              <g font-size="22" fill="#9a7aa8">
                <text transform="translate(606 38) rotate(80)">assau County</text>
                <text transform="translate(668 118) rotate(82)">Town of Huntington</text>
                <text transform="translate(2606 240) rotate(58)">Melville</text>
              </g>
              <g font-size="24" fill="#fff" stroke="#cc5577" stroke-width="3" paint-order="stroke" font-style="italic">
                <text x="33" y="190">38</text><text x="246" y="434">46</text><text x="540" y="640">48</text><text x="930" y="54">39</text><text x="946" y="774">48</text>
                <text x="1464" y="287">40</text><text x="1592" y="304">40S</text><text x="1764" y="233">40</text><text x="1984" y="762">49N</text><text x="2628" y="618">50</text><text x="2916" y="526">50</text>
              </g>
              <g font-size="25" fill="#8c5b4a" text-anchor="middle">
                <path d="M394 240l10-16 10 16zM2836 706l10-16 10 16z" fill="#d08058" />
                <text x="403" y="267">Mannetto</text><text x="403" y="296">Hills</text><text x="403" y="325">85 m</text><text x="2844" y="732">Half Hollow</text>
              </g>
              <g font-size="25" fill="#3f8f63" font-style="italic" text-anchor="middle">
                <text x="566" y="340">Manetto</text><text x="566" y="369">Hills Park</text>
                <g font-size="28"><text x="1242" y="193">West Hills</text><text x="1242" y="229">Nature</text><text x="1242" y="265">Preserve</text></g>
                <text x="2376" y="782">Dr. Jeffrey</text>
              </g>
              <g font-size="25" fill="#77747c" font-style="italic" text-anchor="middle">
                <text x="630" y="532">The Hamlet</text><text x="630" y="561">on Olde</text><text x="630" y="591">Oyster</text><text x="630" y="621">Bay</text>
                <text x="1902" y="446">The Villages</text><text x="1902" y="475">at Huntington</text>
                <text x="1816" y="688">The Villages</text><text x="1816" y="717">West</text>
                <text x="2542" y="71">Country</text><text x="2542" y="100">Pointe</text><text x="2542" y="130">Dix Hills</text>
                <g font-size="30"><text x="2344" y="257">The Greens</text><text x="2344" y="293">at Half</text><text x="2344" y="329">Hollow</text></g>
              </g>
              <g font-size="25" fill="#5d3b45" text-anchor="middle">
                <rect x="668" y="664" width="94" height="42" rx="4" fill="#f2c0cb" stroke="#d896a6" stroke-width="3" /><text x="715" y="695">I 495</text>
                <rect x="1508" y="612" width="110" height="42" rx="4" fill="#fbd5cb" stroke="#e9ad9e" stroke-width="3" /><text x="1563" y="642">NY 110</text>
                <rect x="2431" y="605" width="94" height="42" rx="4" fill="#f2c0cb" stroke="#d896a6" stroke-width="3" /><text x="2478" y="637">I 495</text>
                <rect x="190" y="744" width="110" height="42" rx="4" fill="#f5f5c9" stroke="#cfcf9a" stroke-width="3" /><text x="245" y="775">CR E48</text>
              </g>
              <text x="1298" y="753" font-size="40" font-weight="700" fill="#3d8fc8">P</text>
              <text x="1530" y="402" font-size="34" fill="#333">Melville</text>
            </svg>

            <div class="absolute left-[10px] top-[9px] w-[26px] rounded-sm border border-black/25 bg-white text-black">
              <button aria-label="Zoom in" class="w-full h-6 flex items-center justify-center border-b border-[#ccc]"><svg class="w-[10px] h-[10px]" viewBox="0 0 10 10" stroke="currentColor" stroke-width="1.800"><path d="M5 0v10M0 5h10" /></svg></button>
              <button aria-label="Zoom out" class="w-full h-6 flex items-center justify-center"><svg class="w-[10px] h-[10px]" viewBox="0 0 10 10" stroke="currentColor" stroke-width="1.800"><path d="M0 5h10" /></svg></button>
            </div>
            <button aria-label="Melville office" class="absolute left-1/2 top-1/2 -translate-1/2 w-8 h-8 rounded-full bg-[#55607d] flex items-center justify-center">
              <svg class="w-5 h-5" viewBox="0 0 20 20" stroke="#35b56e" stroke-width="2.600" stroke-linecap="round"><path d="M10 1.500v17M2.800 5.700l14.400 8.600M17.200 5.700L2.800 14.300" /></svg>
            </button>
            <div class="absolute right-0 bottom-0 h-4 px-1 flex items-center gap-1 bg-white/80 font-['Liberation_Sans',sans-serif] text-[11px] text-[#333]">
              <svg class="w-3 h-2" viewBox="0 0 12 8"><path fill="#4c7be1" d="M0 0h12v4H0z" /><path fill="#ffd500" d="M0 4h12v4H0z" /></svg>
              <a href="#" class="text-[#2a80ad]">Leaflet</a>
              <span>|</span>
              <span>© <a href="#" class="text-[#2a80ad]">OpenStreetMap</a></span>
            </div>
          </div>

          <div class="mt-[115px] h-[260px] pt-[67px] pl-[66px] pr-[59px] flex items-start rounded-[20px] bg-[#05384f]">
            <h2 class="text-[40px] leading-[60px] font-medium text-white">Get a personal consultation</h2>
            <a href="#" aria-label="Contact" class="ml-auto mt-[14px] w-[220px] h-14 rounded-full bg-[#3ab56c]"></a>
          </div>
        </div>
      </main>

      <!-- page scrollbar -->
      <div class="w-3 shrink-0 relative bg-[#f3f1f5]">
        <svg class="absolute left-[3px] top-1 w-[6px] h-[4px]" viewBox="0 0 6 4" fill="#55565a"><path d="M0 4l3-4 3 4z" /></svg>
        <div class="absolute inset-x-px top-[721px] h-[149px] bg-[#c1c0c4]"></div>
        <svg class="absolute left-[3px] bottom-[4px] w-[6px] h-[4px]" viewBox="0 0 6 4" fill="#55565a"><path d="M0 0l3 4 3-4z" /></svg>
      </div>
    </div>
    <div class="h-px shrink-0 bg-[#3a3b40]"></div>

    <!-- callout over the panel -->
    <svg class="absolute left-0 top-0 w-[620px] h-[1030px] z-20 pointer-events-none" viewBox="0 0 620 1030">
      <rect x="5" y="790" width="409" height="236" rx="2" fill="none" stroke="#ff2014" stroke-width="4" />
      <path d="M290 842.500L301.500 830.500 304 836 430 795 600 741 600 742 430 799 306 843 307.500 848z" fill="#ff2014" />
      <path d="M240 979.500c0-2.600 3.300-2.600 3.300 0v7c.5-1.500 3-1.200 3.200.4.800-1 2.700-.6 2.900.8 1-.6 2.700 0 2.900 1.500v4.300c0 2.500-1.300 4-1.700 6.800h-8.400c-.6-2.500-3.500-5.500-5.700-8.500-2-2.700-.5-4.300 1.300-3.300l2.200 2z" fill="#fff" stroke="#222" stroke-width="1.200" />
      <path d="M243.300 986.500v4M246.500 987.500v3M249.400 988.500v3" stroke="#222" stroke-width="1" />
    </svg>

    <script>
      const line = (d, w = 1.8) =>
        `<path d="${d}" fill="none" stroke="currentColor" stroke-width="${w}" stroke-linecap="round" stroke-linejoin="round"/>`;
      const disc = (d) =>
        `<circle cx="8" cy="8" r="7" fill="currentColor"/><path d="${d}" fill="none" stroke="#fff" stroke-width="1.700"/>`;
      const solid = (d) => `<path fill-rule="evenodd" d="${d}"/>`;

      const icons = {
        ad: `<rect x=".5" y="2.500" width="15" height="11" rx="1.500"/><text x="8" y="11" font-size="8" font-weight="800" fill="#fff" text-anchor="middle">Ad</text>`,
        "address-book": `<rect x="1.500" y="1" width="11.500" height="14" rx="1.500"/><path d="M13 3h1.500v2.500H13zM13 6.700h1.500v2.500H13zM13 10.500h1.500V13H13z"/><circle cx="7.200" cy="6" r="2" fill="#fff"/><path d="M3.700 11.500c0-4 7-4 7 0z" fill="#fff"/>`,
        "address-card": `<rect y="2" width="16" height="12.500" rx="1.500"/><circle cx="5" cy="6.500" r="1.900" fill="#fff"/><path d="M2 12c0-4 6-4 6 0zM9.500 5.500H14v1H9.500zM9.500 7.700H14v1H9.500zM9.500 10H14v1H9.500z" fill="#fff"/>`,
        adjust: solid("M8 1a7 7 0 1 0 0 14A7 7 0 0 0 8 1zm0 1.900a5.100 5.100 0 0 1 0 10.200z"),
        "air-freshener": solid("M3.500 1h3v3h-3zM2.500 5h5l2 2.500V15h-9V7.500zM5 8a2.300 2.300 0 1 0 .01 0z") + line("M9.500 3h.1M12 1.500h.1M12 4.500h.1M14.500 1h.1M14.500 3.500h.1M14.500 6h.1", 1.5),
        "align-center": line("M4 2h8M2 6h12M4 10h8M2 14h12", 1.6),
        "align-justify": line("M2 2h12M2 6h12M2 10h12M2 14h12", 1.6),
        "align-left": line("M2 2h7M2 6h12M2 10h7M2 14h12", 1.6),
        "align-right": line("M7 2h7M2 6h12M7 10h7M2 14h12", 1.6),
        allergies: line("M4.500 9V4M7 8V2M9.500 8V2M12 8V3.500M2.500 9.500l2 3", 1.9) + `<path d="M3.700 8h9.200v3.500c0 2-1.500 4-3.500 4H7c-1.500 0-3.300-2-4-4z"/><path d="M6 10h1v1H6zM9 9.500h1v1H9zM8 12.500h1v1H8zM11 11.500h1v1h-1z" fill="#fff"/>`,
        ambulance: solid("M0 2h10v3h2.500L16 8.500V13H0zM11 6.200v2.300h3.300L12 6.200zM4.400 4h1.400v1.500h1.500v1.400H5.800v1.500H4.400V6.900H2.900V5.500h1.500z") + `<circle cx="4" cy="13" r="2.600"/><circle cx="4" cy="13" r="1.200" fill="#fff"/><circle cx="12.300" cy="13" r="2.600"/><circle cx="12.300" cy="13" r="1.200" fill="#fff"/>`,
        asl: solid("M0 12L3.500 4.500 5.500 2 5.800 5.500 8 5.500 7.200 7 7.800 8.500 6 11.500 3 11.800zM16 4L10 4.500 8.600 8 8.800 11 10 10 10.500 14 12 12.500 13.500 8z") + line("M1 9.500l5.500 1.500M10 6l5 .5M6 3v5", 1),
        anchor: line("M8 5v9.500M5 7.500h6M1.500 9.500C2 13 5 14.500 8 14.500s6-1.500 6.500-5M.8 11l.9-1.900 1.500 1.400M15.200 11l-.9-1.900-1.500 1.400", 1.6) + `<circle cx="8" cy="3" r="1.700" fill="none" stroke="currentColor" stroke-width="1.500"/>`,
        "double-down": line("M4.500 3.500L8 6.500l3.500-3M4.500 9L8 12l3.500-3"),
        "double-left": line("M7 4.500L3.500 8 7 11.500M12.500 4.500L9 8l3.500 3.500"),
        "double-right": line("M3.500 4.500L7 8l-3.500 3.500M9 4.500L12.500 8 9 11.500"),
        "double-up": line("M4.500 7L8 4l3.500 3M4.500 12.500l3.500-3 3.500 3"),
        "angle-down": line("M4.500 6.500L8 9.800l3.500-3.300"),
        "angle-left": line("M9.500 4.500L6 8l3.500 3.500"),
        "angle-right": line("M6.500 4.500L10 8l-3.500 3.500"),
        "angle-up": line("M4.500 10L8 6.700l3.500 3.300"),
        angry: `<circle cx="8" cy="8" r="7"/><path d="M4 5.500l3 1.300M12 5.500L9 6.800M5.300 12c1.200-1.700 4.200-1.700 5.400 0" fill="none" stroke="#fff" stroke-width="1.100"/><circle cx="5.700" cy="7.700" r="1" fill="#fff"/><circle cx="10.300" cy="7.700" r="1" fill="#fff"/>`,
        ankh: line("M8 8.500V14.500M4 9h8M8 8.500C3.500 4 5.500 1.500 8 1.500S12.500 4 8 8.500z", 1.8),
        apple: solid("M8 5.200C5 3.500 1.500 5 1.700 9 2 12.500 4.500 16 8 14.300c3.500 1.700 6-1.800 6.300-5.300C14.500 5 11 3.500 8 5.200zM7.500 4.200C7.300 2.200 8.500.8 10.500.7 10.700 2.800 9.500 4.200 7.500 4.200z"),
        archive: solid("M1 2h14v3.200H1zM2 6.200h12V14H2zM6 7.500v1.200h4V7.500z"),
        archway: solid("M0 1h16v2H0zM1 4h14v9.500h1V15h-5v-4.500c0-4-6-4-6 0V15H0v-1.500h1z"),
        "alt-down": disc("M8 4v6M5 8l3 3.300L11 8"),
        "alt-left": disc("M12 8H6M8 5L4.700 8 8 11"),
        "alt-right": disc("M4 8h6M8 5l3.300 3L8 11"),
        "alt-up": disc("M8 12V6M5 8l3-3.300L11 8"),
        "circle-down": disc("M8 3.500v8.300M4.300 8.300L8 12l3.700-3.700"),
        "circle-left": disc("M12.500 8H4.200M7.700 4.300L4 8l3.700 3.700"),
        "circle-right": disc("M3.500 8h8.300M8.300 4.300L12 8l-3.700 3.700"),
        "circle-up": disc("M8 12.500V4.200M4.300 7.700L8 4l3.700 3.700"),
        "arrow-down": line("M8 2.500v11M3 8.700l5 5 5-5"),
        "arrow-left": line("M13.500 8h-11M7.300 3l-5 5 5 5"),
        "arrow-right": line("M2.500 8h11M8.700 3l5 5-5 5"),
        "arrow-up": line("M8 13.500v-11M3 7.300l5-5 5 5"),
        arrows: line("M8 2v12M2 8h12M6 3.500l2-2 2 2M6 12.500l2 2 2-2M3.500 6l-2 2 2 2M12.500 6l2 2-2 2", 1.6),
        "arrows-h": line("M2 8h12M4 5.700L1.600 8 4 10.300M12 5.700L14.400 8 12 10.300"),
        "arrows-v": line("M8 2v12M5.700 4L8 1.600 10.300 4M5.700 12L8 14.400 10.300 12"),
        listening: line("M5 8c-1-6 8.500-8 9-1.500.2 3.500-3 4-3 6 0 1.500-1.500 2.500-2.500 2.200M7.500 7c0-3 4-3 4 0 0 1.500-2 2-2 3.500M1 14.500h.1M3.500 12h.1M6 10.200h.1M3.500 15h.1M6 13h.1M1.500 11.500l3 3", 1.4),
        asterisk: line("M8 1.500v13M2.400 4.700l11.200 6.600M13.600 4.700L2.400 11.300", 2.2),
        at: line("M11 8a3 3 0 1 1-6 0 3 3 0 0 1 6 0zM11 5v3.700c0 2 3.200 2 3.200-.9A6.200 6.200 0 1 0 11 13.400", 1.5),
      };

      const grid = document.querySelector("#icons");
      Object.keys(icons).forEach((name) => {
        const button = document.createElement("button");
        button.setAttribute("aria-label", name);
        button.className = "h-[31px] flex items-center justify-center";
        if (name === "asterisk") button.classList.add("text-[#238bd6]");
        button.innerHTML = `<svg class="w-4 h-4" viewBox="0 0 16 16" fill="currentColor">${icons[name]}</svg>`;
        grid.appendChild(button);
      });
    </script>
  </body>
</html>
